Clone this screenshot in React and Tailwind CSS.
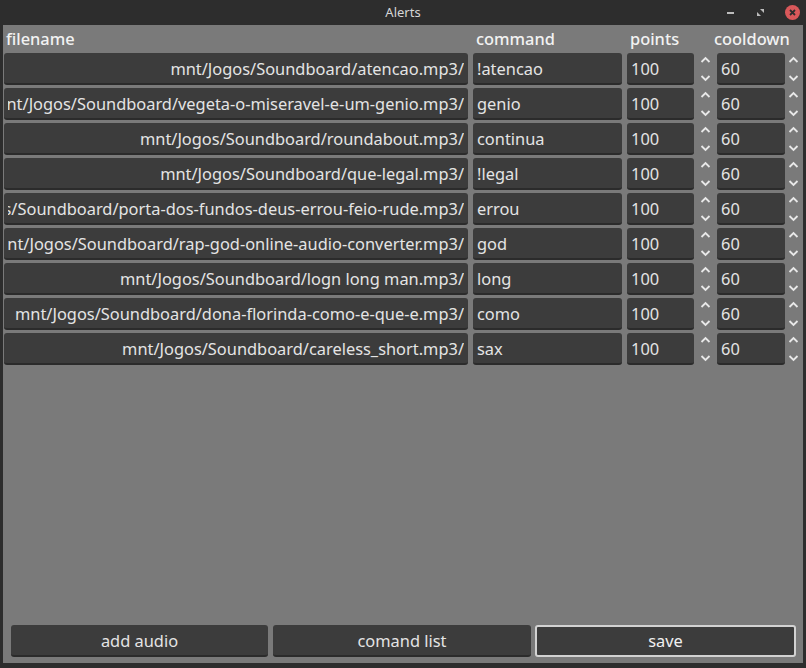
import React from 'react';

const rows = [
  { file: 'mnt/Jogos/Soundboard/atencao.mp3/', cmd: '!atencao' },
  { file: '/mnt/Jogos/Soundboard/vegeta-o-miseravel-e-um-genio.mp3/', cmd: 'genio' },
  { file: 'mnt/Jogos/Soundboard/roundabout.mp3/', cmd: 'continua' },
  { file: 'mnt/Jogos/Soundboard/que-legal.mp3/', cmd: '!legal' },
  { file: '/mnt/Jogos/Soundboard/porta-dos-fundos-deus-errou-feio-rude.mp3/', cmd: 'errou' },
  { file: '/mnt/Jogos/Soundboard/rap-god-online-audio-converter.mp3/', cmd: 'god' },
  { file: 'mnt/Jogos/Soundboard/logn long man.mp3/', cmd: 'long' },
  { file: 'mnt/Jogos/Soundboard/dona-florinda-como-e-que-e.mp3/', cmd: 'como' },
  { file: 'mnt/Jogos/Soundboard/careless_short.mp3/', cmd: 'sax' },
];

const field = 'h-[32px] bg-[#3c3c3c] rounded-[3px] border-b-2 border-[#2b2b2b] text-[16.4px] text-[#e4e4e4] leading-[32px] whitespace-nowrap overflow-hidden';

function Spinner() {
  return (
    <div className="flex flex-col items-center justify-between h-[32px] py-[3px]">
      <svg width="11" height="8" viewBox="0 0 11 8">
        <path d="M1.5 6 L5.5 2 L9.5 6" fill="none" stroke="#e8e8e8" strokeWidth="1.8" />
      </svg>
      <svg width="11" height="8" viewBox="0 0 11 8">
        <path d="M1.5 2 L5.5 6 L9.5 2" fill="none" stroke="#e8e8e8" strokeWidth="1.8" />
      </svg>
    </div>
  );
}

function Row({ file, cmd }) {
  return (
    <div className="flex items-center ml-[1px]">
      <div className={`${field} w-[464px] pl-[4px] pr-[4px]`}>
        <div className="flex justify-end overflow-hidden">
          <span>{file}</span>
        </div>
      </div>
      <div className={`${field} w-[149px] ml-[5px] pl-[4px]`}>{cmd}</div>
      <div className={`${field} w-[67px] ml-[5px] pl-[4px]`}>100</div>
      <div className="w-[23px] flex justify-center">
        <Spinner />
      </div>
      <div className={`${field} w-[68px] pl-[4px]`}>60</div>
      <div className="w-[17px] flex justify-center">
        <Spinner />
      </div>
    </div>
  );
}

export default function App() {
  return (
    <div
      className="w-[806px] h-[668px] bg-[#2d2d2d] flex flex-col overflow-hidden"
      style={{ fontFamily: '"Noto Sans", "Open Sans", sans-serif' }}
    >
      <div className="h-[25px] relative flex items-center justify-center">
        <span className="text-[13px] text-[#d6d6d6]">Alerts</span>
        <div className="absolute right-[6px] top-0 h-[25px] flex items-center">
          <div className="w-[7px] h-[2px] bg-[#bcbcbc] mr-[22px]" />
          <svg width="9" height="9" viewBox="0 0 9 9" className="mr-[20px]">
            <path d="M4 1 H8 V5 Z" fill="#bcbcbc" />
            <path d="M1 4 V8 H5 Z" fill="#bcbcbc" />
          </svg>
          <div className="w-[15px] h-[15px] rounded-full bg-[#d9585a] flex items-center justify-center">
            <svg width="7" height="7" viewBox="0 0 7 7">
              <path d="M1 1 L6 6 M6 1 L1 6" stroke="#2d2d2d" strokeWidth="1.8" />
            </svg>
          </div>
        </div>
      </div>

      <div className="w-[800px] h-[638px] ml-[3px] bg-[#7a7a7a] flex flex-col">
        <div className="h-[28px] flex text-[16.4px] font-medium text-[#f2f2f2] leading-[22px] pt-[3px]">
          <div className="w-[473px] pl-[3px]">filename</div>
          <div className="w-[154px]">command</div>
          <div className="w-[84px]">points</div>
          <div>cooldown</div>
        </div>
        <div className="flex flex-col gap-[3px]">
          {rows.map((r, i) => (
            <Row key={i} file={r.file} cmd={r.cmd} />
          ))}
        </div>
        <div className="flex-1" />
        <div className="flex pl-[8px] pb-[6px]">
          <button className="w-[257px] h-[32px] bg-[#3c3c3c] rounded-[3px] border-b-2 border-[#2b2b2b] text-[16.4px] text-[#e4e4e4] leading-[32px]">
            add audio
          </button>
          <button className="w-[258px] h-[32px] ml-[5px] bg-[#3c3c3c] rounded-[3px] border-b-2 border-[#2b2b2b] text-[16.4px] text-[#e4e4e4] leading-[32px]">
            comand list
          </button>
          <button className="w-[261px] h-[32px] ml-[4px] bg-[#3c3c3c] rounded-[3px] border-2 border-[#d2d2d2] text-[16.4px] text-[#f0f0f0]">
            save
          </button>
        </div>
      </div>
    </div>
  );
}
